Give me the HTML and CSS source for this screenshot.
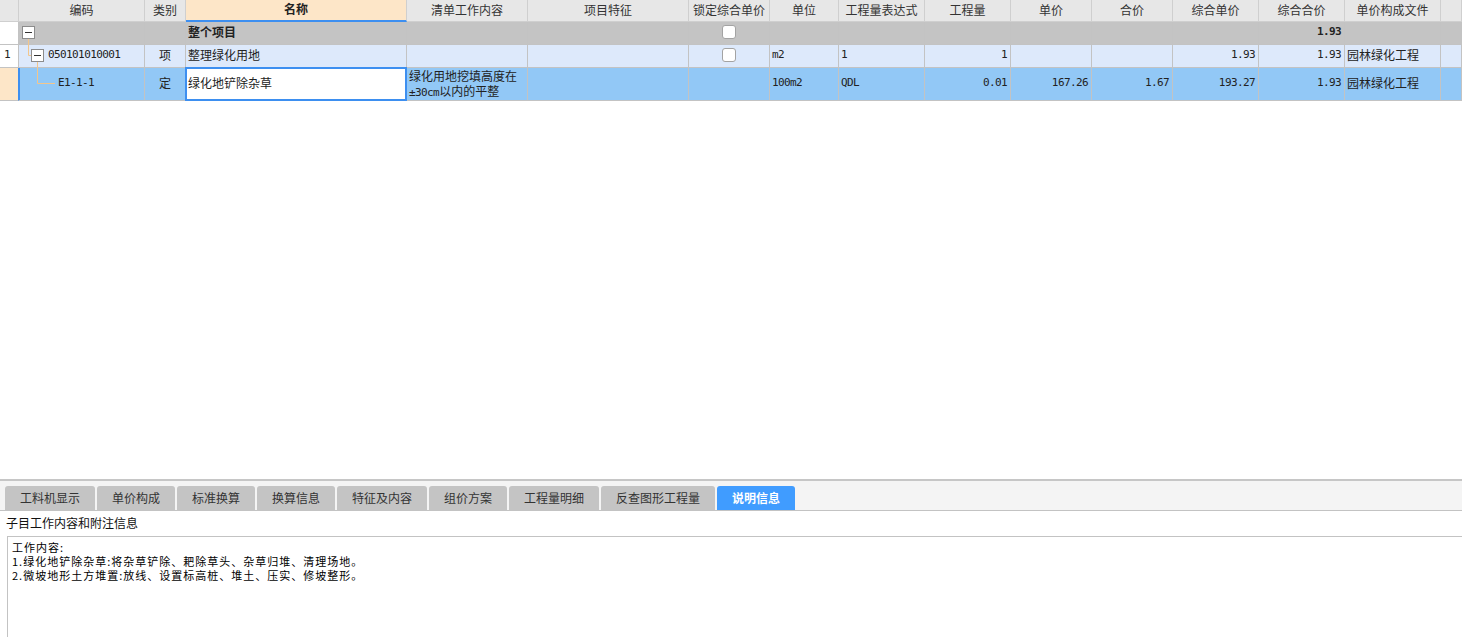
FILE: index.html
```html
<!DOCTYPE html>
<html lang="zh-CN">
<head>
<meta charset="utf-8">
<title>说明信息</title>
<link rel="stylesheet" href="styles.css">
</head>
<body>
<div class="app">
  <div class="grid">
    <div class="row head">
      <div class="c"></div>
      <div class="c ctr">编码</div>
      <div class="c ctr">类别</div>
      <div class="c ctr sel-head">名称</div>
      <div class="c ctr">清单工作内容</div>
      <div class="c ctr">项目特征</div>
      <div class="c ctr">锁定综合单价</div>
      <div class="c ctr">单位</div>
      <div class="c ctr">工程量表达式</div>
      <div class="c ctr">工程量</div>
      <div class="c ctr">单价</div>
      <div class="c ctr">合价</div>
      <div class="c ctr">综合单价</div>
      <div class="c ctr">综合合价</div>
      <div class="c ctr">单价构成文件</div>
      <div class="c"></div>
    </div>
    <div class="row r-total">
      <div class="c rh"></div>
      <div class="c code lvl0"><span class="exp"></span></div>
      <div class="c"></div>
      <div class="c bold">整个项目</div>
      <div class="c"></div>
      <div class="c"></div>
      <div class="c ctr"><span class="chk"></span></div>
      <div class="c"></div>
      <div class="c"></div>
      <div class="c"></div>
      <div class="c"></div>
      <div class="c"></div>
      <div class="c"></div>
      <div class="c num"><span class="mono bold">1.93</span></div>
      <div class="c"></div>
      <div class="c"></div>
    </div>
    <div class="row r-item">
      <div class="c rh"><span class="mono">1</span></div>
      <div class="c code lvl1"><span class="exp"></span><span class="mono">050101010001</span></div>
      <div class="c ctr">项</div>
      <div class="c">整理绿化用地</div>
      <div class="c"></div>
      <div class="c"></div>
      <div class="c ctr"><span class="chk"></span></div>
      <div class="c"><span class="mono">m2</span></div>
      <div class="c"><span class="mono">1</span></div>
      <div class="c num"><span class="mono">1</span></div>
      <div class="c"></div>
      <div class="c"></div>
      <div class="c num"><span class="mono">1.93</span></div>
      <div class="c num"><span class="mono">1.93</span></div>
      <div class="c">园林绿化工程</div>
      <div class="c"></div>
    </div>
    <div class="row r-sub">
      <div class="c rh cur"></div>
      <div class="c code lvl2"><span class="mono">E1-1-1</span></div>
      <div class="c ctr">定</div>
      <div class="c edit">绿化地铲除杂草</div>
      <div class="c wrap"><div class="lines">绿化用地挖填高度在<br><span class="mono">±30cm</span>以内的平整</div></div>
      <div class="c"></div>
      <div class="c"></div>
      <div class="c"><span class="mono">100m2</span></div>
      <div class="c"><span class="mono">QDL</span></div>
      <div class="c num"><span class="mono">0.01</span></div>
      <div class="c num"><span class="mono">167.26</span></div>
      <div class="c num"><span class="mono">1.67</span></div>
      <div class="c num"><span class="mono">193.27</span></div>
      <div class="c num"><span class="mono">1.93</span></div>
      <div class="c">园林绿化工程</div>
      <div class="c"></div>
    </div>
    <svg class="tree-lines" width="60" height="100" viewBox="0 0 60 100">
      <path d="M28.5 39 V55.5 H31 M37.5 62 V83.5 H55" fill="none" stroke="#f3c68c" stroke-width="1"/>
    </svg>
  </div>
  <div class="panel">
    <div class="tabs">
      <div class="tab w90">工料机显示</div>
      <div class="tab w78">单价构成</div>
      <div class="tab w78">标准换算</div>
      <div class="tab w78">换算信息</div>
      <div class="tab w90">特征及内容</div>
      <div class="tab w78">组价方案</div>
      <div class="tab w90">工程量明细</div>
      <div class="tab w115">反查图形工程量</div>
      <div class="tab w78 active">说明信息</div>
    </div>
    <div class="label">子目工作内容和附注信息</div>
    <div class="memo">工作内容:<br>1.绿化地铲除杂草:将杂草铲除、耙除草头、杂草归堆、清理场地。<br>2.微坡地形土方堆置:放线、设置标高桩、堆土、压实、修坡整形。</div>
  </div>
</div>
</body>
</html>
```

FILE: styles.css
```css
html, body {
  margin: 0;
  padding: 0;
  background: #ffffff;
}
body {
  font-family: "Noto Sans CJK SC", "Liberation Sans", sans-serif;
  font-size: 12px;
  color: #222;
  overflow: hidden;
}
.app {
  width: 1462px;
  height: 637px;
  display: flex;
  flex-direction: column;
}
.grid {
  position: relative;
  height: 479px;
  flex: none;
  background: #fff;
}
.row {
  display: grid;
  grid-template-columns: 19px 126px 41px 221px 121px 161px 81px 69px 86px 86px 81px 81px 86px 86px 96px 1fr;
}
.c {
  box-sizing: border-box;
  border-right: 1px solid #c3c3c3;
  border-bottom: 1px solid #c3c3c3;
  display: flex;
  align-items: center;
  padding: 0 2px 2px 2px;
  line-height: 14px;
  white-space: nowrap;
  overflow: hidden;
  min-width: 0;
}
.ctr { justify-content: center; }
.num { justify-content: flex-end; padding-right: 3px; }
.bold { font-weight: bold; }
.mono {
  font-family: "DejaVu Sans Mono", "Liberation Mono", monospace;
  font-size: 11px;
  letter-spacing: -0.6px;
}
.head { height: 22px; background: #e7e7e7; color: #333; }
.head .c { border-color: #cfcfcf; }
.head .sel-head {
  background: #fde6c8;
  font-weight: bold;
  color: #222;
  border-bottom: 2px solid #3d8ff0;
}
.r-total { height: 23px; background: #c4c4c4; }
.r-item { height: 23px; background: #dde9fb; }
.r-sub { height: 33px; background: #92c8f6; }
.rh { background: #fff; padding-left: 4px; }
.rh.cur { background: #fde6c8; border-right: 1px solid #3d8ff0; }
.r-sub .code { box-shadow: inset 1px 0 0 #3d8ff0; }
.lvl0 { padding-left: 3px; }
.lvl1 { padding-left: 12px; }
.lvl2 { padding-left: 39px; }
.exp {
  box-sizing: border-box;
  width: 13px;
  height: 13px;
  border: 1px solid #8c8c8c;
  background: #fff;
  position: relative;
  flex: none;
  margin-right: 4px;
}
.exp::after {
  content: "";
  position: absolute;
  left: 2px;
  right: 2px;
  top: 5px;
  height: 1px;
  background: #333;
}
.chk {
  box-sizing: border-box;
  width: 14px;
  height: 14px;
  border: 1px solid #a3a3a3;
  border-radius: 3px;
  background: #fff;
}
.edit {
  background: #fff;
  position: relative;
  z-index: 1;
  border: 2px solid #3d8ff0;
  margin: -1px 0 0 -1px;
  padding-left: 1px;
}
.wrap {
  padding-bottom: 1px;
}
.lines {
  line-height: 15px;
}
.tree-lines {
  position: absolute;
  left: 0;
  top: 0;
  pointer-events: none;
}
.panel {
  flex: 1;
  border-top: 2px solid #c6c6c6;
  display: flex;
  flex-direction: column;
  min-height: 0;
}
.tabs {
  box-sizing: border-box;
  height: 30px;
  background: #f4f4f4;
  border-bottom: 1px solid #c3c3c3;
  padding: 5px 0 0 5px;
  display: flex;
  gap: 2px;
  align-items: flex-end;
}
.tab {
  box-sizing: border-box;
  height: 24px;
  padding-bottom: 2px;
  background: #c4c4c4;
  color: #333;
  border-radius: 3px 3px 0 0;
  display: flex;
  align-items: center;
  justify-content: center;
  font-size: 12px;
}
.w78 { width: 78px; }
.w90 { width: 90px; }
.w115 { width: 114px; }
.tab.active {
  background: #409cff;
  color: #fff;
  font-weight: bold;
}
.label {
  height: 25px;
  line-height: 23px;
  padding-left: 6px;
  color: #111;
  font-size: 12px;
}
.memo {
  flex: 1;
  margin-left: 7px;
  border-top: 1px solid #c3c3c3;
  border-left: 1px solid #c3c3c3;
  padding: 3px 0 0 4px;
  line-height: 14px;
  font-size: 11px;
  letter-spacing: 1px;
  color: #000;
}
```
